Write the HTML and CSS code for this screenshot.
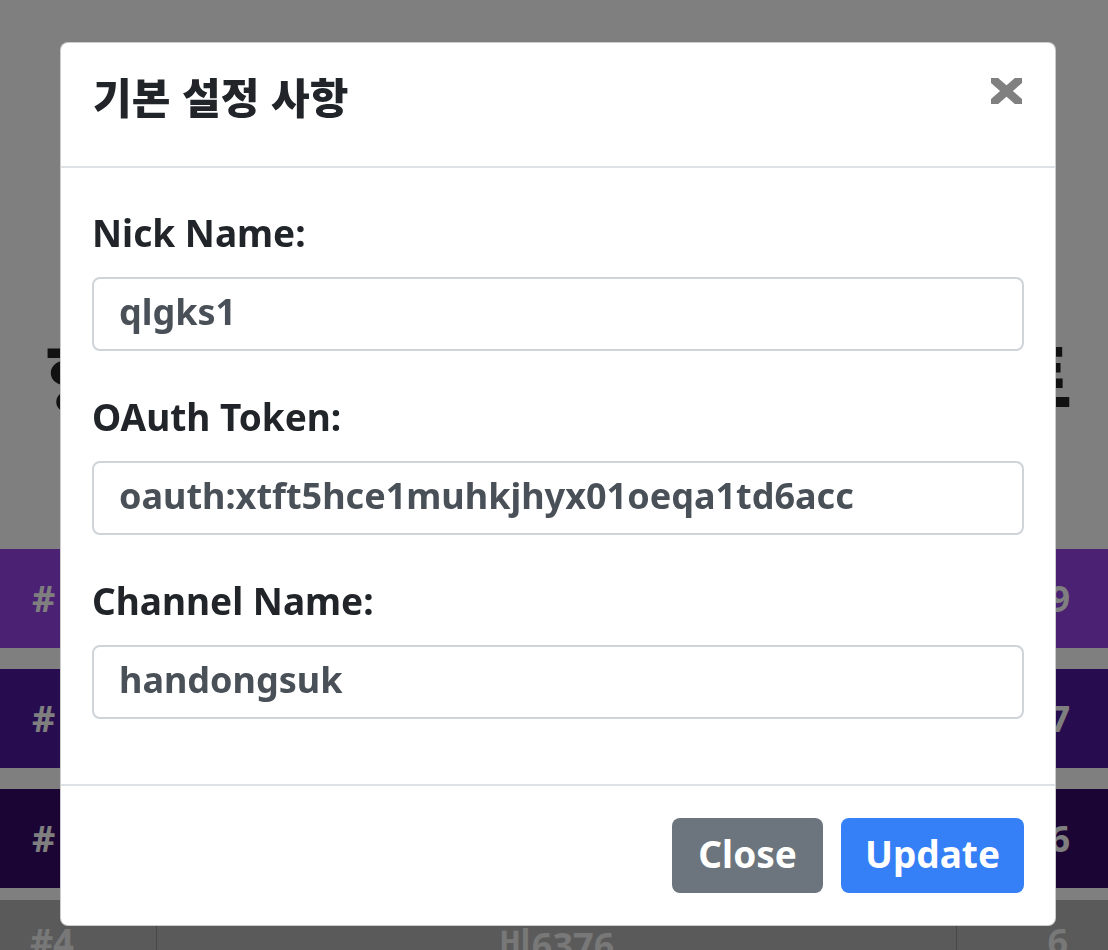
FILE: index.html
```html
<!DOCTYPE html>
<html lang="ko">
<head>
<meta charset="utf-8">
<title>기본 설정 사항</title>
<link rel="stylesheet" href="styles.css">
</head>
<body>
<main class="page">
  <h1 class="hero"><span>항목</span><span>리스트</span></h1>
  <div class="ranks">
    <div class="rank rank-1"><span class="rank-no"><span>#</span><span>1</span></span><span>9</span></div>
    <div class="rank rank-2"><span class="rank-no"><span>#</span><span>2</span></span><span>7</span></div>
    <div class="rank rank-3"><span class="rank-no"><span>#</span><span>3</span></span><span>6</span></div>
  </div>
  <div class="table-row">
    <div class="cell cell-num">#4</div>
    <div class="cell cell-name">비6376</div>
    <div class="cell cell-score">6</div>
  </div>
</main>

<div class="overlay">
  <div class="modal" role="dialog">
    <div class="modal-header">
      <h5 class="modal-title">기본 설정 사항</h5>
      <button class="close-btn" type="button" aria-label="Close">
        <svg width="31" height="26" viewBox="0 0 31 26"><path d="M-1.5 -2 L32.5 28 M32.5 -2 L-1.5 28" stroke="#808080" stroke-width="8.5" fill="none"/></svg>
      </button>
    </div>
    <div class="modal-body">
      <div class="field">
        <label class="field-label">Nick Name:</label>
        <input class="field-input" type="text" value="qlgks1">
      </div>
      <div class="field">
        <label class="field-label">OAuth Token:</label>
        <input class="field-input" type="text" value="oauth:xtft5hce1muhkjhyx01oeqa1td6acc">
      </div>
      <div class="field">
        <label class="field-label">Channel Name:</label>
        <input class="field-input" type="text" value="handongsuk">
      </div>
    </div>
    <div class="modal-footer">
      <button class="btn btn-secondary" type="button">Close</button>
      <button class="btn btn-primary" type="button">Update</button>
    </div>
  </div>
</div>
</body>
</html>
```
FILE: styles.css
```css
* { box-sizing: border-box; }
html, body { margin: 0; padding: 0; }
body {
  background: #ffffff;
  font-family: "Noto Sans", "Noto Sans CJK KR", sans-serif;
  overflow: hidden;
  height: 950px;
}

/* background page */
.page {
  padding-top: 336px;
}
.hero {
  margin: 0;
  display: flex;
  justify-content: space-between;
  padding: 0 36px 0 45px;
  font-family: "Noto Sans CJK KR", sans-serif;
  font-weight: 900;
  font-size: 76px;
  line-height: 76px;
  color: #222222;
}
.ranks {
  margin-top: 137px;
  display: flex;
  flex-direction: column;
  gap: 21px;
}
.rank {
  height: 99px;
  display: flex;
  align-items: center;
  justify-content: space-between;
  padding: 0 38px 0 32px;
  font-weight: 700;
  font-size: 36px;
  color: #ffffff;
}
.rank-no {
  display: flex;
  gap: 14px;
}
.rank-1 { background: #9742e8; }
.rank-2 { background: #4f1a9f; }
.rank-3 { background: #340a6b; }

.table-row {
  margin-top: 12px;
  height: 100px;
  display: grid;
  grid-template-columns: 157px 800px 1fr;
  background: #b4b4b4;
  color: #f0f0f0;
  font-weight: 700;
  font-size: 36px;
}
.cell {
  padding-top: 17px;
  border-right: 1px solid #8e8e8e;
}
.cell-num { padding-left: 30px; }
.cell-name { text-align: center; }
.cell-score { border-right: none; text-align: right; padding-right: 40px; }

/* modal */
.overlay {
  position: fixed;
  inset: 0;
  background: rgba(0, 0, 0, 0.5);
  display: flex;
  justify-content: center;
  align-items: flex-start;
  padding: 42px 0 0 8px;
}
.modal {
  width: 996px;
  background: #ffffff;
  border: 1px solid rgba(0, 0, 0, 0.2);
  border-radius: 8px;
  color: #212529;
}
.modal-header {
  height: 125px;
  display: flex;
  justify-content: space-between;
  align-items: flex-start;
  padding: 23px 33px 0 32px;
  border-bottom: 2px solid #dee2e6;
}
.modal-title {
  margin: 0;
  font-family: "Noto Sans CJK KR", sans-serif;
  font-weight: 900;
  font-size: 42px;
  line-height: 60px;
  letter-spacing: 0;
  color: #212529;
}
.close-btn {
  margin-top: 12px;
  padding: 0;
  border: none;
  background: none;
  width: 31px;
  height: 26px;
  display: block;
}
.close-btn svg { display: block; overflow: hidden; }

.modal-body {
  padding: 41px 31px 65px 31px;
  display: flex;
  flex-direction: column;
  gap: 42px;
}
.field {
  display: flex;
  flex-direction: column;
}
.field-label {
  font-weight: 700;
  font-size: 37px;
  line-height: 48px;
  margin-bottom: 20px;
  color: #212529;
}
.field-input {
  height: 74px;
  width: 100%;
  border: 2px solid #ced4da;
  border-radius: 8px;
  padding: 0 25px 6px 25px;
  font-family: "Noto Sans", sans-serif;
  font-weight: 700;
  font-size: 36px;
  color: #495057;
  background: #ffffff;
  outline: none;
}

.modal-footer {
  border-top: 2px solid #dee2e6;
  padding: 32px 31px 32px 31px;
  display: flex;
  justify-content: flex-end;
  gap: 18px;
}
.btn {
  height: 75px;
  border: none;
  border-radius: 8px;
  padding: 0 26px 4px 26px;
  font-family: "Noto Sans", sans-serif;
  font-weight: 700;
  font-size: 37px;
  color: #ffffff;
}
.btn-secondary { background: #6c757d; }
.btn-primary { background: #3580f6; padding: 0 24px 4px 24px; }
```
